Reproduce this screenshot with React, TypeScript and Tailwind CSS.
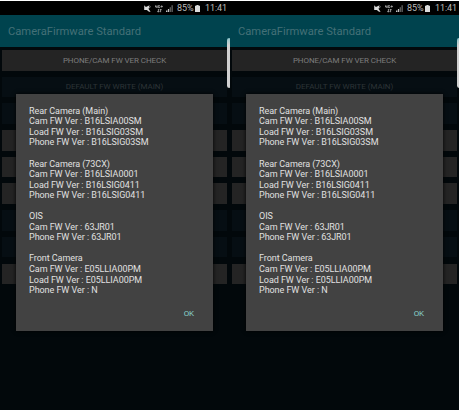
const REPORT = [
  ["Rear Camera (Main)", "Cam FW Ver : B16LSIA00SM", "Load FW Ver : B16LSIG03SM", "Phone FW Ver : B16LSIG03SM"],
  ["Rear Camera (73CX)", "Cam FW Ver : B16LSIA0001", "Load FW Ver : B16LSIG0411", "Phone FW Ver : B16LSIG0411"],
  ["OIS", "Cam FW Ver : 63JR01", "Phone FW Ver : 63JR01"],
  ["Front Camera", "Cam FW Ver : E05LLIA00PM", "Load FW Ver : E05LLIA00PM", "Phone FW Ver : N"],
];

const BUTTONS = [
  { label: "PHONE/CAM FW VER CHECK", enabled: true },
  { label: "DEFAULT FW WRITE (MAIN)", enabled: false },
  { label: "", enabled: false },
  { label: "", enabled: true },
  { label: "", enabled: true },
  { label: "", enabled: true },
  { label: "", enabled: false },
  { label: "", enabled: false },
  { label: "", enabled: true },
];

function MuteIcon() {
  return (
    <svg className="w-[7px] h-[7px]" viewBox="0 0 7 7" fill="#dcdcdc">
      <path d="M0.2 0.3L1.9 2L5.6 0.3L4.6 4L6.6 6.7H5L2.8 4.9H0.2z" />
      <path d="M5 3.2L6.7 1.6" stroke="#b8b8b8" strokeWidth="0.8" />
    </svg>
  );
}

function NetworkIcon() {
  return (
    <svg className="w-[8px] h-[8px]" viewBox="0 0 8 8" fill="none" stroke="#a8a8a8" strokeWidth="0.9">
      <path d="M0.5 0.4V2H2.4M2 0.4V3M4.8 0.6H3.3V2.6H4.8V1.6M5.6 1.5H7.8M6.7 0.4V2.6" />
      <path d="M3.4 4V7M2.4 6L3.4 7.2L4.4 6M5.6 7.2V4.2M4.8 5.1L5.6 4L6.6 5.1" />
    </svg>
  );
}

function SignalIcon() {
  return (
    <svg className="w-[7px] h-[7px]" viewBox="0 0 7 7">
      <path d="M0 5.4H1.4V7H0zM1.9 4H3.2V7H1.9z" fill="#c4c4c4" />
      <path d="M3.7 2.2H4.9V7H3.7zM5.5 0.2H6.8V7H5.5z" fill="#666666" />
    </svg>
  );
}

function BatteryIcon() {
  return (
    <svg className="w-[5px] h-[7px]" viewBox="0 0 5 7" fill="#dcdcdc">
      <path d="M1.4 0H3.6V0.8H5V7H0V0.8H1.4z" />
    </svg>
  );
}

function StatusBar() {
  return (
    <div className="h-[14px] shrink-0 bg-black flex items-center justify-end pt-px text-[9px] leading-none text-[#bdbdbd]">
      <MuteIcon />
      <span className="ml-[4px] flex"><NetworkIcon /></span>
      <span className="ml-[3px] flex"><SignalIcon /></span>
      <span className="ml-[4px] w-[17px] whitespace-nowrap">85%</span>
      <span className="ml-[1px] flex"><BatteryIcon /></span>
      <span className="ml-[5px] w-[21px] mr-[4px] whitespace-nowrap tracking-[-0.1px]">11:41</span>
    </div>
  );
}

function Dialog() {
  return (
    <div className="absolute left-[16px] top-[93px] w-[197px] h-[237px] bg-[#424242] shadow-[0_0_4px_#000] flex flex-col pl-[13px] pr-[19px] pt-[11.8px]">
      <div className="flex flex-col gap-[10.55px] text-[9px] leading-[10.55px] tracking-[-0.05px] text-[#e0e0e0] whitespace-nowrap">
        {REPORT.map((section) => (
          <div key={section[0]}>
            {section.map((line) => (
              <p key={line}>{line}</p>
            ))}
          </div>
        ))}
      </div>
      <button className="self-end mt-[13.5px] text-[8px] leading-[10px] tracking-[-0.1px] text-[#86cfc8]">OK</button>
    </div>
  );
}

function Phone() {
  return (
    <section className="relative w-[230px] h-[409px] shrink-0 bg-[#02080b] flex flex-col">
      <StatusBar />
      <header className="h-[32px] shrink-0 bg-[#00434e] flex items-center pl-[8px] pt-[2px] text-[11.2px] text-[#447077] whitespace-nowrap">
        CameraFirmware Standard
      </header>
      <div className="flex flex-col gap-[6.2px] pt-[3px] pl-[2px] pr-[3px]">
        {BUTTONS.map((button, i) => (
          <div
            key={i}
            className={
              button.enabled
                ? "h-[20.5px] pt-[1.5px] bg-[#242424] text-[#7c7c7c] flex items-center justify-center text-[8px] tracking-[-0.08px]"
                : "h-[20.5px] pt-px bg-[#060e13] text-[#2d3437] flex items-center justify-center text-[8px] tracking-[-0.03px]"
            }
          >
            {button.label}
          </div>
        ))}
      </div>
      <Dialog />
      {/* edge panel handle */}
      <div className="absolute right-0 top-[37px] w-[3px] h-[50px] rounded-l-[3px] rounded-r-[1px] bg-gradient-to-b from-[#8fc6cc] via-[#d2d2d2] via-15% to-[#d0d0d0]" />
    </section>
  );
}

export default function App() {
  return (
    <main
      className="w-[460px] h-[410px] bg-white pt-px pr-px flex overflow-hidden"
      style={{ fontFamily: "Roboto, sans-serif" }}
    >
      <Phone />
      <div className="w-[229px] shrink-0 overflow-hidden">
        <Phone />
      </div>
    </main>
  );
}
